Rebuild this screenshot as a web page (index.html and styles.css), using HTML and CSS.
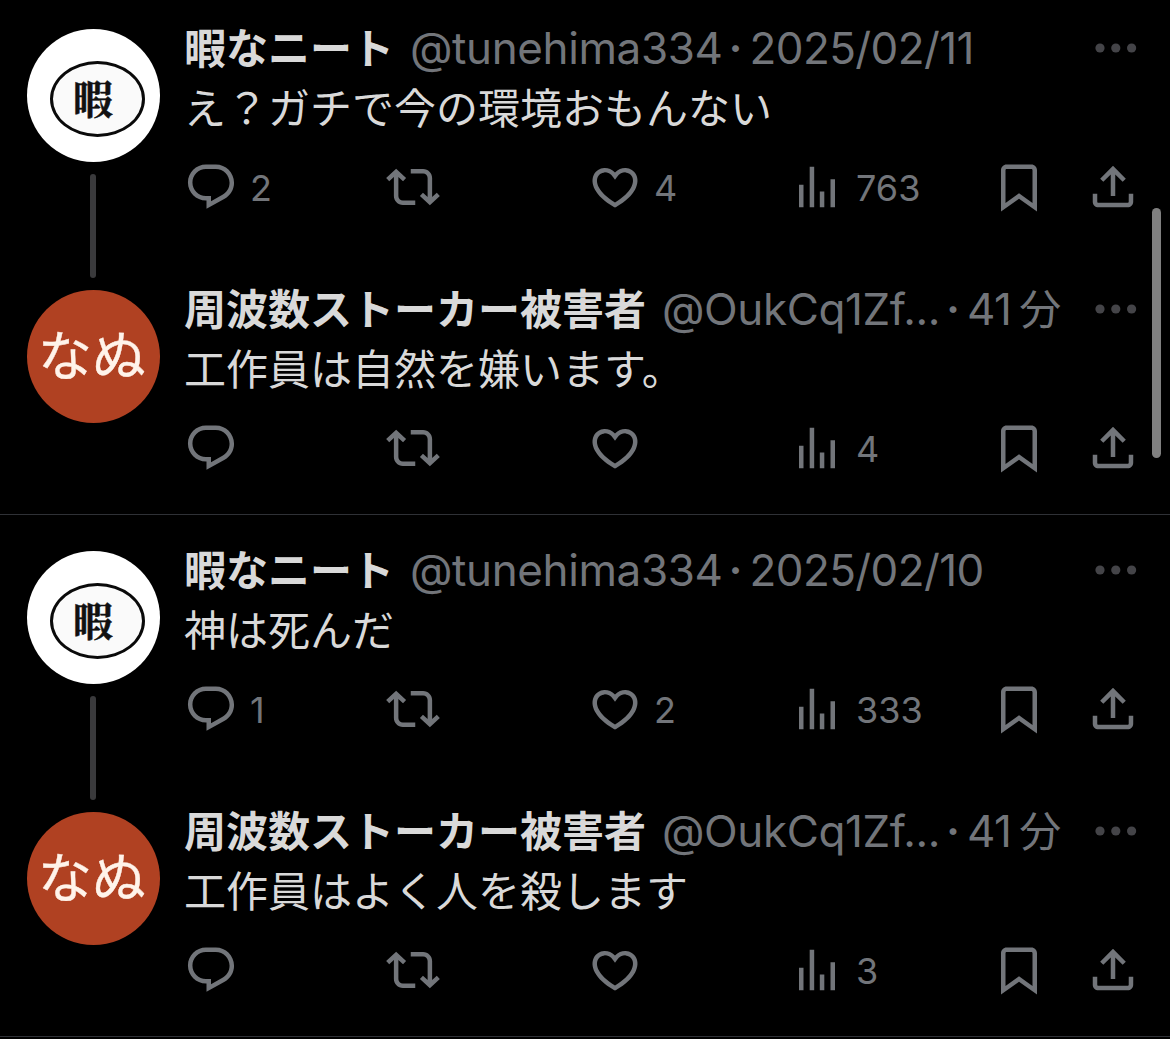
FILE: index.html
```html
<!DOCTYPE html>
<html lang="ja">
<head>
  <meta charset="UTF-8">
  <meta name="viewport" content="width=device-width, initial-scale=1.0">
  <title>タイムライン</title>
  <link rel="stylesheet" href="styles.css">
</head>
<body>
  <svg class="sprite" viewBox="0 0 24 24">
    <symbol id="reply" viewBox="0 0 24 24"><path d="M1.751 10c0-4.42 3.584-8 8.005-8h4.366c4.49 0 8.129 3.64 8.129 8.13 0 2.96-1.607 5.68-4.196 7.11l-8.054 4.46v-3.69h-.067c-4.49.1-8.183-3.51-8.183-8.01zm8.005-6c-3.317 0-6.005 2.69-6.005 6 0 3.37 2.77 6.08 6.138 6.01l.351-.01h1.761v2.3l5.087-2.81c1.951-1.08 3.163-3.13 3.163-5.36 0-3.39-2.744-6.13-6.129-6.13H9.756z"/></symbol>
    <symbol id="repost" viewBox="0 0 24 24"><path d="M4.5 3.88l4.432 4.14-1.364 1.46L5.5 7.55V16c0 1.1.896 2 2 2H13v2H7.5c-2.209 0-4-1.79-4-4V7.55L1.432 9.48.068 8.02 4.5 3.88zM16.5 6H11V4h5.5c2.209 0 4 1.79 4 4v8.45l2.068-1.93 1.364 1.46-4.432 4.14-4.432-4.14 1.364-1.46 2.068 1.93V8c0-1.1-.896-2-2-2z"/></symbol>
    <symbol id="like" viewBox="0 0 24 24"><path d="M16.697 5.5c-1.222-.06-2.679.51-3.89 2.16l-.805 1.09-.806-1.09C9.984 6.01 8.526 5.44 7.304 5.5c-1.243.07-2.349.78-2.91 1.91-.552 1.12-.633 2.78.479 4.82 1.074 1.97 3.257 4.27 7.129 6.61 3.87-2.34 6.052-4.64 7.126-6.61 1.111-2.04 1.03-3.7.477-4.82-.561-1.13-1.666-1.84-2.908-1.91zm4.187 7.69c-1.351 2.48-4.001 5.12-8.379 7.67l-.503.3-.504-.3c-4.379-2.55-7.029-5.19-8.382-7.67-1.36-2.5-1.41-4.86-.514-6.67.887-1.79 2.647-2.91 4.601-3.01 1.651-.09 3.368.56 4.798 2.01 1.429-1.45 3.146-2.1 4.796-2.01 1.954.1 3.714 1.22 4.601 3.01.896 1.81.846 4.17-.514 6.67z"/></symbol>
    <symbol id="views" viewBox="0 0 24 24"><path d="M8.75 21V3h2v18h-2zM18 21V8.5h2V21h-2zM4 21l.004-10h2L6 21H4zm9.248 0v-7h2v7h-2z"/></symbol>
    <symbol id="bookmark" viewBox="0 0 24 24"><path d="M4 4.5C4 3.12 5.119 2 6.5 2h11C18.881 2 20 3.12 20 4.5v18.44l-8-5.71-8 5.71V4.5zM6.5 4c-.276 0-.5.22-.5.5v14.56l6-4.29 6 4.29V4.5c0-.28-.224-.5-.5-.5h-11z"/></symbol>
    <symbol id="share" viewBox="0 0 24 24"><path d="M12 2.59l5.7 5.7-1.41 1.42L13 6.41V16h-2V6.41l-3.3 3.3-1.41-1.42L12 2.59zM21 15l-.02 3.51c0 1.38-1.12 2.49-2.5 2.49H5.5C4.11 21 3 19.88 3 18.5V15h2v3.5c0 .28.22.5.5.5h12.98c.28 0 .5-.22.5-.5L19 15h2z"/></symbol>
    <symbol id="more" viewBox="0 0 42 10"><circle cx="5" cy="5" r="4.6"/><circle cx="20.8" cy="5" r="4.6"/><circle cx="36.6" cy="5" r="4.6"/></symbol>
  </svg>

  <main class="timeline">
    <section class="thread">
      <article class="tweet">
        <div class="side">
          <div class="avatar avatar-hima"><span>暇</span></div>
          <div class="line"></div>
        </div>
        <div class="content">
          <header class="head">
            <span class="name">暇なニート</span>
            <span class="handle">@tunehima334</span>
            <span class="dot">·</span>
            <span class="time">2025/02/11</span>
            <svg class="more"><use href="#more"/></svg>
          </header>
          <p class="text">え？ガチで今の環境おもんない</p>
          <div class="actions">
            <div class="action"><svg><use href="#reply"/></svg><span>2</span></div>
            <div class="action"><svg><use href="#repost"/></svg></div>
            <div class="action"><svg><use href="#like"/></svg><span>4</span></div>
            <div class="action"><svg><use href="#views"/></svg><span>763</span></div>
            <div class="action"><svg><use href="#bookmark"/></svg></div>
            <div class="action"><svg><use href="#share"/></svg></div>
          </div>
        </div>
      </article>
      <article class="tweet">
        <div class="side">
          <div class="avatar avatar-nanu"><span>なぬ</span></div>
        </div>
        <div class="content">
          <header class="head">
            <span class="name">周波数ストーカー被害者</span>
            <span class="handle">@OukCq1Zf...</span>
            <span class="dot">·</span>
            <span class="time">41<span class="unit">分</span></span>
            <svg class="more"><use href="#more"/></svg>
          </header>
          <p class="text">工作員は自然を嫌います。</p>
          <div class="actions">
            <div class="action"><svg><use href="#reply"/></svg></div>
            <div class="action"><svg><use href="#repost"/></svg></div>
            <div class="action"><svg><use href="#like"/></svg></div>
            <div class="action"><svg><use href="#views"/></svg><span>4</span></div>
            <div class="action"><svg><use href="#bookmark"/></svg></div>
            <div class="action"><svg><use href="#share"/></svg></div>
          </div>
        </div>
      </article>
    </section>

    <section class="thread">
      <article class="tweet">
        <div class="side">
          <div class="avatar avatar-hima"><span>暇</span></div>
          <div class="line"></div>
        </div>
        <div class="content">
          <header class="head">
            <span class="name">暇なニート</span>
            <span class="handle">@tunehima334</span>
            <span class="dot">·</span>
            <span class="time">2025/02/10</span>
            <svg class="more"><use href="#more"/></svg>
          </header>
          <p class="text">神は死んだ</p>
          <div class="actions">
            <div class="action"><svg><use href="#reply"/></svg><span>1</span></div>
            <div class="action"><svg><use href="#repost"/></svg></div>
            <div class="action"><svg><use href="#like"/></svg><span>2</span></div>
            <div class="action"><svg><use href="#views"/></svg><span>333</span></div>
            <div class="action"><svg><use href="#bookmark"/></svg></div>
            <div class="action"><svg><use href="#share"/></svg></div>
          </div>
        </div>
      </article>
      <article class="tweet">
        <div class="side">
          <div class="avatar avatar-nanu"><span>なぬ</span></div>
        </div>
        <div class="content">
          <header class="head">
            <span class="name">周波数ストーカー被害者</span>
            <span class="handle">@OukCq1Zf...</span>
            <span class="dot">·</span>
            <span class="time">41<span class="unit">分</span></span>
            <svg class="more"><use href="#more"/></svg>
          </header>
          <p class="text">工作員はよく人を殺します</p>
          <div class="actions">
            <div class="action"><svg><use href="#reply"/></svg></div>
            <div class="action"><svg><use href="#repost"/></svg></div>
            <div class="action"><svg><use href="#like"/></svg></div>
            <div class="action"><svg><use href="#views"/></svg><span>3</span></div>
            <div class="action"><svg><use href="#bookmark"/></svg></div>
            <div class="action"><svg><use href="#share"/></svg></div>
          </div>
        </div>
      </article>
    </section>
  </main>
  <div class="scrollbar"></div>
</body>
</html>
```
FILE: styles.css
```css
* { box-sizing: border-box; }
body { margin: 0; height: 1039px; overflow: hidden; background: #000; color: #d9d9d9; font-family: Inter, "Noto Sans CJK JP", sans-serif; }
.sprite { display: none; }
svg { display: block; flex: none; fill: currentColor; }

.thread { height: 515px; padding: 29px 0 0 27px; border-bottom: 1px solid #2f3136; }
.thread + .thread { height: 522px; padding-top: 36px; }
.tweet { display: flex; height: 261px; }

.side { display: flex; flex-direction: column; width: 133px; margin-right: 24px; }
.avatar { display: flex; align-items: center; justify-content: center; flex: none; width: 133px; height: 133px; border-radius: 50%; }
.avatar-hima { background: #fff; padding: 7px 0 0 7px; }
.avatar-hima span { width: 95px; height: 76px; padding-right: 8px; border: 3px solid #0a0a0a; border-radius: 50%; background: #fafafa; color: #111; font: 700 40px/66px "Noto Serif CJK JP", "Noto Sans CJK JP", serif; text-align: center; -webkit-text-stroke: 0.5px #111; }
.avatar-nanu { background: #b04122; color: #fff3ea; }
.avatar-nanu span { padding-right: 3px; font-size: 54px; line-height: 60px; white-space: nowrap; -webkit-text-stroke: 0.4px #fff3ea; }
.line { flex: 1; width: 6px; margin: 12px 0 12px 63px; border-radius: 3px; background: #3a3a3c; }

.content { width: 956px; }
.head { display: flex; align-items: center; height: 60px; margin-top: -11px; color: #72757a; font-size: 44px; line-height: 60px; white-space: nowrap; }
.name { margin-right: 16px; padding-top: 2px; color: #d9d9d9; font-size: 42px; font-weight: 700; line-height: 60px; }
.handle { letter-spacing: -0.4px; }
.dot { margin: 0 7px 0 6px; font-weight: 600; }
.time { letter-spacing: -0.6px; }
.unit { margin-left: 8px; font-size: 42px; }
.more { width: 42px; height: 10px; margin-left: auto; margin-right: 3px; color: #444448; }
.text { height: 60px; margin: 1px 0 0; font-size: 42px; line-height: 60px; white-space: nowrap; }

.actions { display: grid; grid-template-columns: 202px 202px 202px 202px 94px 54px; margin-top: 21px; color: #72757a; }
.action { display: flex; align-items: center; height: 54px; }
.action svg { width: 54px; height: 54px; }
.action span { margin-left: 12px; padding-top: 1px; font-size: 36px; line-height: 54px; }

.scrollbar { position: absolute; top: 208px; right: 9px; width: 9px; height: 250px; border-radius: 5px; background: #808080; }
```
